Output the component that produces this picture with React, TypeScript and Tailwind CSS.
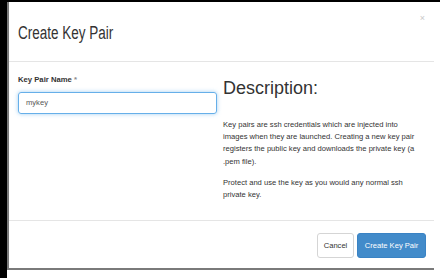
export default function App() {
  return (
    <div className="w-[440px] h-[278px] bg-white flex flex-col font-['Liberation_Sans',Arial,sans-serif] text-[#333] overflow-hidden">
      <div className="h-[2px] bg-black shrink-0" />
      <div className="flex flex-1">
        <div className="w-[7px] bg-black shrink-0" />
        <div className="w-[427px] h-[268px] border-l-2 border-b-2 border-[#7a7a7a] flex flex-col">
          {/* Header */}
          <div className="h-[60px] shrink-0 border-b border-[#e5e5e5] flex justify-between pl-[9px] pr-[9px]">
            <h4 className="pt-[22px] text-[18px] leading-[18px] font-normal scale-x-[0.75] origin-left whitespace-nowrap">
              Create Key Pair
            </h4>
            <span className="mt-[12px] text-[9px] leading-[9px] text-[#c8c8c8]">×</span>
          </div>

          {/* Body */}
          <div className="flex-1 flex pl-[9px] pt-[13px]">
            <div className="w-[199px] flex flex-col">
              <label className="text-[7.7px] leading-[10px] font-bold whitespace-nowrap">
                Key Pair Name <span className="text-[#8a8a8a]">*</span>
              </label>
              <div className="mt-[7px] h-[22px] rounded-[3px] border border-[#66afe9] shadow-[0_0_4px_rgba(102,175,233,0.6)] flex items-center pl-[7px] text-[7.6px] text-[#555]">
                mykey
              </div>
            </div>
            <div className="ml-[6px] w-[200px] flex flex-col">
              <h3 className="mt-[4px] text-[18px] leading-[18px] font-normal whitespace-nowrap">Description:</h3>
              <p className="mt-[22px] text-[7.6px] leading-[12.2px] whitespace-nowrap">
                Key pairs are ssh credentials which are injected into
                <br />
                images when they are launched. Creating a new key pair
                <br />
                registers the public key and downloads the private key (a
                <br />
                .pem file).
              </p>
              <p className="mt-[9px] text-[7.6px] leading-[12.2px] whitespace-nowrap">
                Protect and use the key as you would any normal ssh
                <br />
                private key.
              </p>
            </div>
          </div>

          {/* Footer */}
          <div className="h-[48px] shrink-0 border-t border-[#e5e5e5] flex justify-end items-start pt-[12px] pr-[8px] gap-[3px]">
            <button className="w-[37px] h-[25px] rounded-[3px] border border-[#d5d5d5] bg-white text-[7.6px] text-[#333] overflow-hidden whitespace-nowrap">
              Cancel
            </button>
            <button className="w-[69px] h-[25px] rounded-[3px] border border-[#3a83c4] bg-[#428bca] text-[7.6px] text-white whitespace-nowrap">
              Create Key Pair
            </button>
          </div>
        </div>
      </div>
    </div>
  );
}
